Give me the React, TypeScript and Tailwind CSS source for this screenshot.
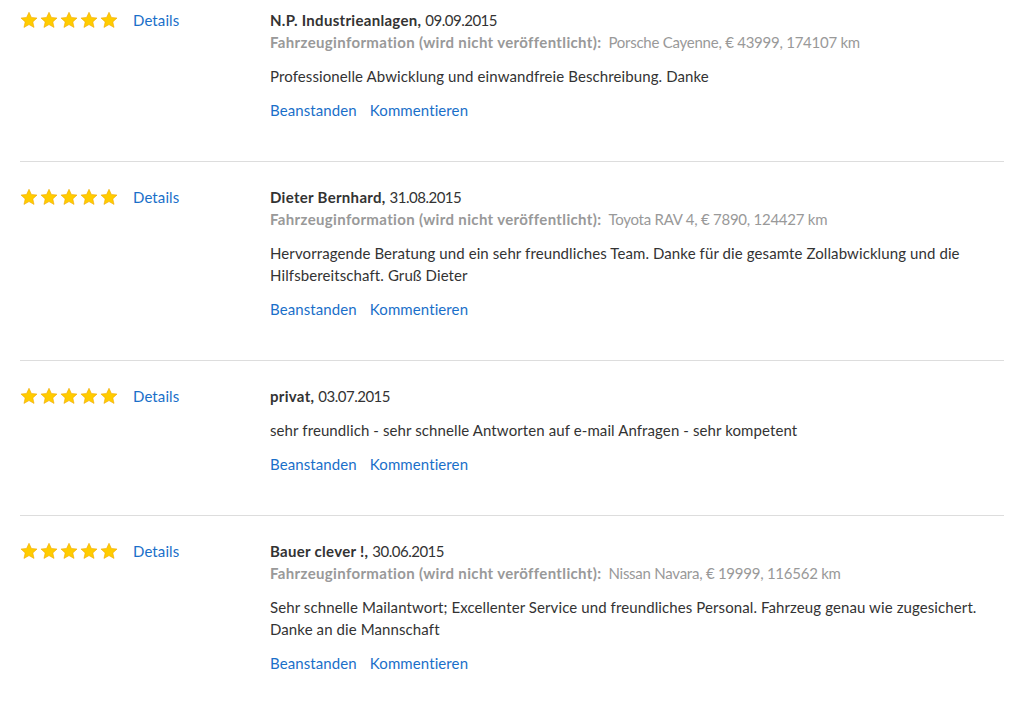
import React from "react";

type Review = {
  name: string;
  date: string;
  vehicle?: string;
  text: string[];
};

const reviews: Review[] = [
  {
    name: "N.P. Industrieanlagen",
    date: "09.09.2015",
    vehicle: "Porsche Cayenne, € 43999, 174107 km",
    text: ["Professionelle Abwicklung und einwandfreie Beschreibung. Danke"],
  },
  {
    name: "Dieter Bernhard",
    date: "31.08.2015",
    vehicle: "Toyota RAV 4, € 7890, 124427 km",
    text: [
      "Hervorragende Beratung und ein sehr freundliches Team. Danke für die gesamte Zollabwicklung und die",
      "Hilfsbereitschaft. Gruß Dieter",
    ],
  },
  {
    name: "privat",
    date: "03.07.2015",
    text: ["sehr freundlich - sehr schnelle Antworten auf e-mail Anfragen - sehr kompetent"],
  },
  {
    name: "Bauer clever !",
    date: "30.06.2015",
    vehicle: "Nissan Navara, € 19999, 116562 km",
    text: [
      "Sehr schnelle Mailantwort; Excellenter Service und freundliches Personal. Fahrzeug genau wie zugesichert.",
      "Danke an die Mannschaft",
    ],
  },
];

function Star() {
  return (
    <svg width="18" height="18" viewBox="0 0 24 23">
      <path
        d="M12 1.2l3.2 6.9 7.5.8-5.6 5.1 1.6 7.4L12 17.6l-6.7 3.8 1.6-7.4L1.3 8.9l7.5-.8z"
        fill="#ffcc00"
        stroke="#f0a800"
        strokeWidth="0.8"
        strokeLinejoin="round"
      />
    </svg>
  );
}

export default function App() {
  return (
    <div
      className="bg-white w-[1028px] min-h-[704px] text-[15px] leading-[22px] text-[#333] tracking-[0.1px]"
      style={{ fontFamily: "Lato, 'Noto Sans', sans-serif" }}
    >
      <div className="pl-[20px] pr-[24px]">
        {reviews.map((r, i) => (
          <div
            key={i}
            className={`flex ${i === 0 ? "pt-[9px]" : "pt-[24px] border-t border-[#dddddd]"} ${
              i === reviews.length - 1 ? "pb-[20px]" : "pb-[40px]"
            }`}
          >
            <div className="w-[113px] flex gap-[2px] h-[22px] items-center">
              <Star />
              <Star />
              <Star />
              <Star />
              <Star />
            </div>
            <div className="w-[137px] text-[#1a6fc9]">Details</div>
            <div className="flex-1">
              <div>
                <span className="font-bold tracking-[0.3px]">{r.name},</span>{" "}
                <span className="tracking-[-0.5px]">{r.date}</span>
              </div>
              {r.vehicle && (
                <div className="text-[#999]">
                  <span className="font-bold tracking-[0.35px]">
                    Fahrzeuginformation (wird nicht veröffentlicht):
                  </span>
                  <span className="ml-[7px] tracking-[-0.25px]">{r.vehicle}</span>
                </div>
              )}
              <div className="mt-[12px]">
                {r.text.map((t, j) => (
                  <div key={j}>{t}</div>
                ))}
              </div>
              <div className="mt-[12px] text-[#1a6fc9] flex gap-[13px]">
                <span>Beanstanden</span>
                <span>Kommentieren</span>
              </div>
            </div>
          </div>
        ))}
      </div>
    </div>
  );
}
